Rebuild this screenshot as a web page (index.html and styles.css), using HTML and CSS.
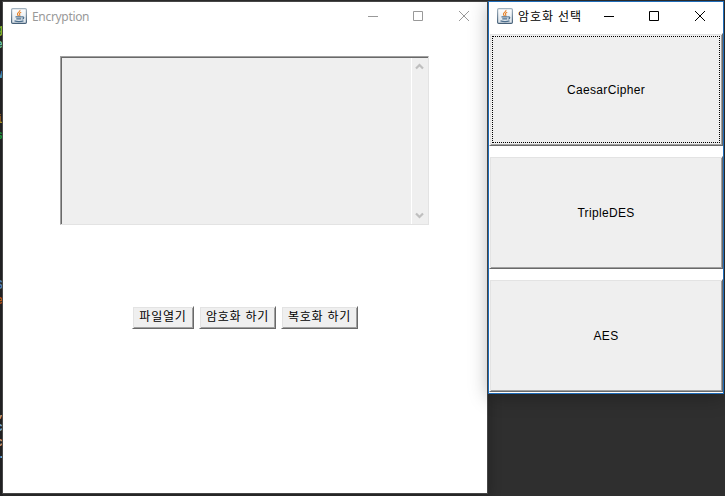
FILE: index.html
```
<!DOCTYPE html>
<html lang="ko">
<head>
<meta charset="utf-8">
<title>Encryption</title>
<link rel="stylesheet" href="styles.css">
</head>
<body>
<svg class="defs" width="0" height="0" aria-hidden="true">
  <linearGradient id="tile" x1="0" y1="0" x2="0" y2="1"><stop offset="0" stop-color="#fff"/><stop offset="1" stop-color="#dbe3ea"/></linearGradient>
  <linearGradient id="edge" x1="0" y1="0" x2="0" y2="1"><stop offset="0" stop-color="#a3b3c0"/><stop offset="1" stop-color="#466078"/></linearGradient>
  <symbol id="java" viewBox="0 0 16 16">
    <rect x=".6" y=".6" width="14.8" height="14.8" rx="1.2" fill="url(#tile)" stroke="url(#edge)" stroke-width="1.2"/>
    <path d="M8.9 2c.8 1.8-3.200 2.600-2.400 4.600.2.600.8.900 1 1.500M10.200 4.200c-2 .9-2.200 1.700-1.400 2.700.3.500 0 .9-.4 1.300" fill="none" stroke="#e8842c" stroke-width="1.100"/>
    <path d="M4.500 8.900h6.300M5.300 10.900h5M11 9c2.400-.5 2.200 1.600.3 2.200M3.500 12.900c2.500.8 6.500.8 9 0" fill="none" stroke="#4c6e8c" stroke-width="1.200"/>
  </symbol>
</svg>
<div class="desktop">
  <div class="editor">
    <i class="g lime">g</i><i class="g mint">e</i><i class="g sky">w</i><i class="g gold">i</i><i class="g green">s</i>
    <i class="g blue">S</i><i class="g orange">e</i><i class="g c1">,</i><i class="g c2">c</i><i class="g c3">c</i><i class="g c4">.</i>
  </div>
  <main class="window main">
    <header class="title">
      <svg class="logo" width="16" height="16"><use href="#java"/></svg>
      <span class="name">Encryption</span>
      <svg class="ctl" width="103" height="12" viewBox="0 0 103 12" fill="none" stroke="currentColor"><path d="M0 5.500h10M45.500.5h9v9h-9zM91 0l10 10M101 0l-10 10"/></svg>
    </header>
    <div class="textarea">
      <div class="bar">
        <svg width="9" height="7" viewBox="0 0 9 7"><path d="M1 5.500l3.500-3.500L8 5.500" fill="none" stroke="#bfbfbf" stroke-width="2.200"/></svg>
        <svg width="9" height="7" viewBox="0 0 9 7"><path d="M1 1.500L4.500 5 8 1.500" fill="none" stroke="#bfbfbf" stroke-width="2.200"/></svg>
      </div>
    </div>
    <div class="actions">
      <button class="btn open"><span>파일열기</span></button>
      <button class="btn enc"><span>암호화 하기</span></button>
      <button class="btn dec"><span>복호화 하기</span></button>
    </div>
  </main>
  <section class="window dialog">
    <header class="title">
      <svg class="logo" width="16" height="16"><use href="#java"/></svg>
      <span class="name">암호화 선택</span>
      <svg class="ctl" width="103" height="12" viewBox="0 0 103 12" fill="none" stroke="currentColor"><path d="M0 5.500h10M45.500.5h9v9h-9zM91 0l10 10M101 0l-10 10"/></svg>
    </header>
    <div class="choices">
      <button class="btn focus">CaesarCipher</button>
      <button class="btn">TripleDES</button>
      <button class="btn">AES</button>
    </div>
  </section>
</div>
</body>
</html>
```
FILE: styles.css
```
* { box-sizing: border-box; }
body { margin: 0; }
.defs { position: absolute; }
.desktop {
  position: relative;
  width: 725px;
  height: 496px;
  overflow: hidden;
  background: #2f2f2f;
}
.editor {
  position: absolute;
  inset: 0 auto 0 0;
  width: 3px;
  background: #262627;
  overflow: hidden;
}
.g {
  position: absolute;
  right: 0;
  font: normal bold 12px/14px "Liberation Mono", monospace;
}
.lime { top: 23px; color: #9acd32; }
.mint { top: 38px; color: #79e0b4; }
.sky { top: 68px; color: #55a8dd; }
.gold { top: 113px; color: #b8a52a; }
.green { top: 129px; color: #1faa45; }
.blue { top: 279px; color: #5d8fc4; }
.orange { top: 294px; color: #d0641c; }
.c1 { top: 407px; right: -2px; color: #e6b08a; }
.c2 { top: 421px; color: #8cc0ee; }
.c3 { top: 436px; color: #e6b08a; }
.c4 { top: 450px; right: -2px; line-height: 10px; color: #8cc0ee; }

.window {
  position: absolute;
  background: #fff;
  display: flex;
  flex-direction: column;
}
.main {
  left: 2px;
  top: 1px;
  width: 486px;
  height: 493px;
  border: 1px solid #464646;
  box-shadow: 0 2px 12px rgba(0, 0, 0, .3);
}
.dialog {
  left: 488px;
  top: 1px;
  width: 236px;
  height: 393px;
  border: 1px solid #1f6cb8;
  box-shadow: -1px 0 0 #444, 0 3px 18px rgba(0, 0, 0, .28);
}
.title {
  display: flex;
  align-items: flex-start;
  flex: none;
  height: 31px;
  padding: 6px 0 0 8px;
  font: 12px/17px "Open Sans", "Noto Sans CJK KR", sans-serif;
  color: #000;
}
.main .title { color: #999; }
.name { margin-left: 5px; white-space: nowrap; }
.main .name { font-family: "Noto Sans", sans-serif; letter-spacing: -.32px; }
.dialog .name { margin-top: -1px; font-family: "Noto Sans CJK KR", sans-serif; letter-spacing: .9px; }
.ctl { margin: 3px 16px 0 auto; }

.textarea {
  display: flex;
  justify-content: flex-end;
  flex: none;
  width: 369px;
  height: 169px;
  margin: 23px 0 0 57px;
  border: 1px solid;
  border-color: #a0a0a0 #e3e3e3 #e3e3e3 #a0a0a0;
  box-shadow: inset 1px 1px 0 #696969;
  background: #efefef;
}
.bar {
  display: flex;
  flex-direction: column;
  justify-content: space-between;
  align-items: center;
  width: 17px;
  margin-top: 1px;
  padding: 5px 1px 5px 0;
  border-left: 1px solid #fff;
}
.actions {
  display: flex;
  gap: 5px;
  margin: 81px 0 0 129px;
}
.btn {
  position: relative;
  display: flex;
  align-items: center;
  justify-content: center;
  margin: 0;
  padding: 0;
  border: 1px solid;
  border-color: #fff #696969 #696969 #fff;
  box-shadow: inset 1px 1px 0 #e3e3e3, inset -1px -1px 0 #a0a0a0;
  background: #efefef;
  color: #000;
  white-space: nowrap;
  font: 12px/14px "Liberation Sans", sans-serif;
}
.actions .btn {
  width: 77px;
  height: 23px;
  font: 12px/16px "Noto Sans CJK KR", sans-serif;
}
.actions .open { width: 62px; }
.actions span { margin-top: -3px; }
.open span { letter-spacing: .8px; }
.enc span, .dec span { letter-spacing: .7px; }
.choices {
  display: flex;
  flex-direction: column;
  gap: 10px;
}
.choices .btn { height: 113px; letter-spacing: .33px; }
.focus::after {
  content: "";
  position: absolute;
  inset: 2px;
  border: 1px dotted #000;
}
```
